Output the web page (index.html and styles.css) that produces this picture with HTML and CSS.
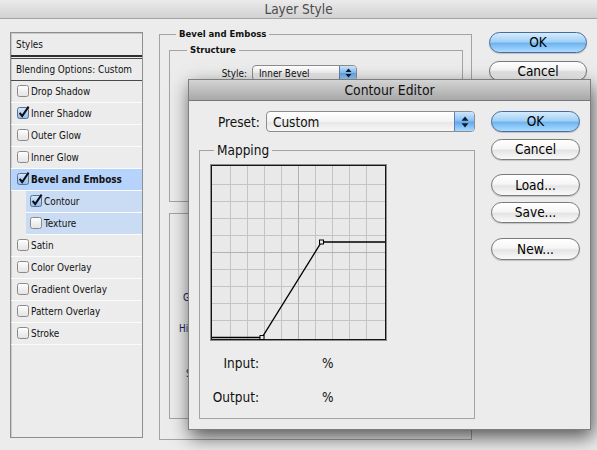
FILE: index.html
```html
<!DOCTYPE html>
<html>
<head>
<meta charset="utf-8">
<link rel="stylesheet" href="styles.css">
</head>
<body>
<svg class="defs" width="0" height="0">
  <defs>
    <linearGradient id="cbg" x1="0" y1="0" x2="0" y2="1">
      <stop offset="0" stop-color="#ffffff"/>
      <stop offset="1" stop-color="#e2e2e2"/>
    </linearGradient>
    <linearGradient id="cbb" x1="0" y1="0" x2="0" y2="1">
      <stop offset="0" stop-color="#d6e8fb"/>
      <stop offset="1" stop-color="#8fbbea"/>
    </linearGradient>
    <symbol id="cb-off" viewBox="0 0 13 13">
      <rect x="0.5" y="1.5" width="11" height="11" rx="2" fill="url(#cbg)" stroke="#8a8a8a"/>
    </symbol>
    <symbol id="cb-on" viewBox="0 0 13 13">
      <rect x="0.5" y="1.5" width="11" height="11" rx="2" fill="url(#cbb)" stroke="#5c6f8c"/>
      <path d="M2.6 6.8 L5.2 10 L11.6 0.6" fill="none" stroke="#0d0d18" stroke-width="2"/>
    </symbol>
  </defs>
</svg>

<div class="win">
  <div class="titlebar">Layer Style</div>
  <div class="content">
    <div class="stylelist">
      <div class="li head">Styles</div>
      <div class="li blend">Blending Options: Custom</div>
      <div class="li"><svg class="cb"><use href="#cb-off"/></svg>Drop Shadow</div>
      <div class="li"><svg class="cb"><use href="#cb-on"/></svg>Inner Shadow</div>
      <div class="li"><svg class="cb"><use href="#cb-off"/></svg>Outer Glow</div>
      <div class="li"><svg class="cb"><use href="#cb-off"/></svg>Inner Glow</div>
      <div class="li sel"><svg class="cb"><use href="#cb-on"/></svg>Bevel and Emboss</div>
      <div class="li sub"><svg class="cb"><use href="#cb-on"/></svg>Contour</div>
      <div class="li sub"><svg class="cb"><use href="#cb-off"/></svg>Texture</div>
      <div class="li"><svg class="cb"><use href="#cb-off"/></svg>Satin</div>
      <div class="li"><svg class="cb"><use href="#cb-off"/></svg>Color Overlay</div>
      <div class="li"><svg class="cb"><use href="#cb-off"/></svg>Gradient Overlay</div>
      <div class="li"><svg class="cb"><use href="#cb-off"/></svg>Pattern Overlay</div>
      <div class="li"><svg class="cb"><use href="#cb-off"/></svg>Stroke</div>
    </div>

    <fieldset class="group bevel">
      <legend>Bevel and Emboss</legend>
      <fieldset class="group structure">
        <legend>Structure</legend>
        <div class="style-row">
          <span class="style-lbl">Style:</span>
          <div class="popup popup-sm">
            <span>Inner Bevel</span>
            <span class="stepper">
              <svg width="7" height="10" viewBox="0 0 7 10"><path d="M3.5 0.5 L6.5 4 L0.5 4 Z M0.5 6 L6.5 6 L3.5 9.5 Z" fill="#0a1a30"/></svg>
            </span>
          </div>
        </div>
      </fieldset>
      <fieldset class="group shading">
        <div class="sh-row sh-gloss">G</div>
        <div class="sh-row sh-high">Hi</div>
        <div class="sh-row sh-shadow">S</div>
      </fieldset>
    </fieldset>

    <div class="btncol">
      <button class="btn default">OK</button>
      <button class="btn">Cancel</button>
    </div>
  </div>

  <div class="editor">
    <div class="ed-title">Contour Editor</div>
    <div class="ed-body">
      <div class="ed-left">
        <div class="preset-row">
          <span class="preset-lbl">Preset:</span>
          <div class="popup popup-lg">
            <span>Custom</span>
            <span class="stepper">
              <svg width="8" height="12" viewBox="0 0 8 12"><path d="M4 0.5 L7.5 4.8 L0.5 4.8 Z M0.5 7.2 L7.5 7.2 L4 11.5 Z" fill="#0a1a30"/></svg>
            </span>
          </div>
        </div>
        <fieldset class="group mapping">
          <legend>Mapping</legend>
          <svg class="graph" width="177" height="177" viewBox="0 0 177 177">
            <rect x="0" y="0" width="177" height="177" fill="#e9e9e9"/>
            <g stroke="#c4c4c4" stroke-width="1">
              <path d="M20.5 2V175 M37.5 2V175 M54.5 2V175 M71.5 2V175 M105.5 2V175 M122.5 2V175 M139.5 2V175 M156.5 2V175"/>
              <path d="M2 20.5H175 M2 37.5H175 M2 54.5H175 M2 71.5H175 M2 105.5H175 M2 122.5H175 M2 139.5H175 M2 156.5H175"/>
            </g>
            <g stroke="#b2b2b2" stroke-width="1">
              <path d="M88.5 2V175 M2 88.5H175"/>
            </g>
            <rect x="0.5" y="0.5" width="176" height="176" fill="none" stroke="#8c8c8c"/>
            <rect x="1.5" y="1.5" width="174" height="174" fill="none" stroke="#161616"/>
            <polyline points="2,173.5 52,173.5 111.5,78 175,78" fill="none" stroke="#000" stroke-width="1.3"/>
            <rect x="50" y="171.5" width="4" height="4" fill="#e9e9e9" stroke="#000" stroke-width="1"/>
            <rect x="109.5" y="76" width="4" height="4" fill="#e9e9e9" stroke="#000" stroke-width="1"/>
          </svg>
          <div class="io-row io-in"><span class="io-lbl">Input:</span><span class="io-pct">%</span></div>
          <div class="io-row io-out"><span class="io-lbl">Output:</span><span class="io-pct">%</span></div>
        </fieldset>
      </div>
      <div class="ed-btns">
        <button class="btn default">OK</button>
        <button class="btn b-cancel">Cancel</button>
        <button class="btn b-load">Load...</button>
        <button class="btn b-save">Save...</button>
        <button class="btn b-new">New...</button>
      </div>
    </div>
  </div>
</div>
</body>
</html>
```

FILE: styles.css
```css
html, body {
  margin: 0;
  padding: 0;
}
body {
  width: 597px;
  height: 450px;
  overflow: hidden;
  background: #ececec;
  font-family: "DejaVu Sans Condensed", "DejaVu Sans", sans-serif;
  color: #111;
}
.defs {
  position: absolute;
  width: 0;
  height: 0;
}
.win {
  position: relative;
  width: 597px;
  height: 450px;
  background: #ececec;
}
.titlebar {
  height: 18px;
  line-height: 18px;
  border-bottom: 1px solid #a4a4a4;
  background: linear-gradient(#ebebeb, #d2d2d2);
  text-align: center;
  font-size: 13.5px;
  color: #4a4a4a;
}
.content {
  display: flex;
  align-items: flex-start;
  padding: 13px 0 0 10px;
}

/* style list */
.stylelist {
  width: 131px;
  height: 404px;
  border: 1px solid #8e8e8e;
  box-shadow: inset 1px 1px 0 #c9c9c9;
  background: #ececec;
  font-size: 9.9px;
}
.li {
  height: 21px;
  border-bottom: 1px solid #fbfbfb;
  display: flex;
  align-items: center;
  padding-left: 6px;
  white-space: nowrap;
}
.li.head {
  height: 22px;
  padding-left: 5px;
  border-bottom: 2px solid #2e2e2e;
}
.li.blend {
  margin-top: 1px;
  padding-left: 5px;
  border-top: 1px solid #4a4a4a;
  border-bottom: 1px solid #4a4a4a;
}
.li.sel {
  background: #b5d3fb;
  font-weight: bold;
}
.li.sub {
  margin-left: 15px;
  padding-left: 4px;
  background: #c9dcf3;
}
.cb {
  width: 13px;
  height: 13px;
  margin: -2px 1px 0 0;
  flex: none;
}

/* group boxes */
.group {
  margin: 0;
  border: 1px solid #a3a3a3;
  box-sizing: border-box;
  min-width: 0;
}
.group legend {
  padding: 0 3px;
  font-size: 9.5px;
  font-weight: bold;
  line-height: 12px;
}
.bevel {
  margin: -4px 0 0 16px;
  width: 313px;
  height: 412px;
  padding: 0 8px 0 9px;
}
.bevel > legend {
  margin-left: 7px;
}
.structure {
  margin-top: 4px;
  width: 294px;
  height: 158px;
  padding: 0;
}
.structure > legend {
  margin-left: 17px;
}
.style-row {
  display: flex;
  align-items: center;
  margin-top: 9px;
  padding-left: 50px;
  font-size: 9.9px;
}
.style-lbl {
  width: 27px;
  text-align: right;
  margin-right: 5px;
}
.shading {
  margin-top: 11px;
  width: 294px;
  height: 206px;
  padding: 0;
}
.sh-row {
  font-size: 9.9px;
  line-height: 12px;
  color: #1a1f5a;
  white-space: nowrap;
}
.sh-gloss { margin-top: 78px; padding-left: 13px; }
.sh-high { margin-top: 19px; padding-left: 9px; }
.sh-shadow { margin-top: 33px; padding-left: 16px; }

/* popups */
.popup {
  box-sizing: border-box;
  display: flex;
  align-items: center;
  justify-content: space-between;
  border: 1px solid #8d8d8d;
  border-radius: 4px;
  background: linear-gradient(#ffffff, #f3f3f3 50%, #e6e6e6 52%, #f7f7f7);
  overflow: hidden;
  white-space: nowrap;
}
.popup-sm {
  width: 105px;
  height: 16px;
  padding-left: 6px;
}
.popup-lg {
  width: 210px;
  height: 21px;
  padding-left: 6px;
  font-size: 13.5px;
}
.stepper {
  align-self: stretch;
  display: flex;
  align-items: center;
  justify-content: center;
  background: linear-gradient(#cfe6fc, #86bff2 48%, #5ea7ec 52%, #a9dafd);
  border-left: 1px solid #5f82b3;
}
.popup-sm .stepper { width: 16px; }
.popup-lg .stepper { width: 19px; }

/* buttons */
.btn {
  display: block;
  box-sizing: border-box;
  width: 100%;
  height: 21px;
  padding: 0;
  border: 1px solid #7a7a7a;
  border-radius: 11px;
  background: linear-gradient(#ffffff 0%, #f6f6f6 45%, #e4e4e4 55%, #fafafa 100%);
  box-shadow: 0 1px 1px rgba(0, 0, 0, 0.18);
  font-family: "DejaVu Sans Condensed", "DejaVu Sans", sans-serif;
  font-size: 13.5px;
  line-height: 19px;
  color: #000;
}
.btn.default {
  border-color: #4a6a9c;
  background: linear-gradient(#d5ecfd 0%, #a2d0f6 45%, #70b5f0 55%, #aadcff 100%);
}
.btncol {
  margin-left: 17px;
  width: 98px;
}
.btncol .btn + .btn {
  margin-top: 8px;
  height: 20px;
}

/* contour editor */
.editor {
  position: absolute;
  left: 188px;
  top: 79px;
  width: 403px;
  height: 351px;
  box-sizing: border-box;
  border: 1px solid #7e7e7e;
  background: #ececec;
  box-shadow: 2px 7px 18px rgba(0, 0, 0, 0.65);
}
.ed-title {
  height: 20px;
  line-height: 20px;
  border-bottom: 1px solid #777;
  background: linear-gradient(#d4d4d4, #a8a8a8);
  text-align: center;
  font-size: 13.8px;
  color: #111;
}
.ed-body {
  display: grid;
  grid-template-columns: 276px 89px;
  column-gap: 16px;
  padding: 10px 0 0 10px;
}
.preset-row {
  display: flex;
  align-items: center;
  height: 21px;
  padding-left: 19px;
  font-size: 13.5px;
}
.preset-lbl {
  width: 42px;
  margin-right: 6px;
}
.mapping {
  margin-top: 10px;
  width: 276px;
  height: 277px;
  padding: 0 10px;
}
.mapping > legend {
  margin-left: 4px;
  font-size: 13.5px;
  font-weight: normal;
  line-height: 16px;
}
.graph {
  display: block;
  margin-top: 6px;
}
.io-row {
  display: flex;
  font-size: 13.5px;
  line-height: 16px;
}
.io-in { margin-top: 14px; }
.io-out { margin-top: 18px; }
.io-lbl {
  width: 49px;
  text-align: right;
}
.io-pct {
  margin-left: 63px;
}
.ed-btns .b-cancel { margin-top: 7px; }
.ed-btns .b-load { margin-top: 14px; height: 22px; }
.ed-btns .b-save { margin-top: 6px; }
.ed-btns .b-new { margin-top: 15px; height: 22px; }
```
